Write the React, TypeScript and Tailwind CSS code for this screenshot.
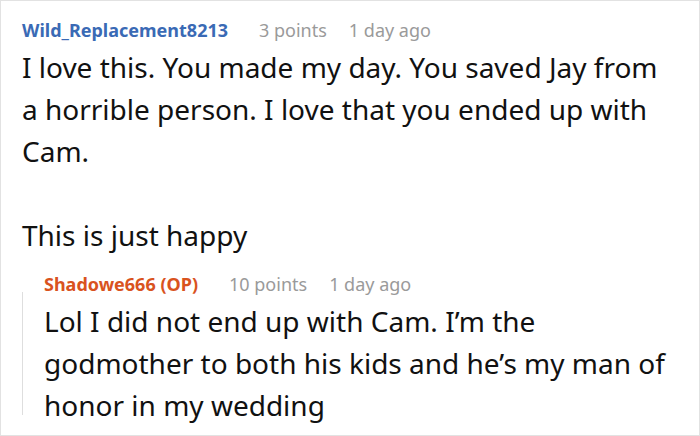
import React from "react";

interface Comment {
  author: string;
  points: string;
  age: string;
  lines: string[];
  op?: boolean;
}

const top: Comment = {
  author: "Wild_Replacement8213",
  points: "3 points",
  age: "1 day ago",
  lines: [
    "I love this. You made my day. You saved Jay from",
    "a horrible person. I love that you ended up with",
    "Cam.",
    "",
    "This is just happy",
  ],
};

const reply: Comment = {
  author: "Shadowe666 (OP)",
  points: "10 points",
  age: "1 day ago",
  op: true,
  lines: [
    "Lol I did not end up with Cam. I\u2019m the",
    "godmother to both his kids and he\u2019s my man of",
    "honor in my wedding",
  ],
};

const Meta: React.FC<{ c: Comment }> = ({ c }) => (
  <div className="flex items-center text-[18px] leading-[22px]">
    <span className={c.op ? "font-bold text-[#d9531e]" : "font-bold text-[#3a6ab5]"}>{c.author}</span>
    <span className="text-[#9a9a9a] ml-[31px]">{c.points}</span>
    <span className="text-[#9a9a9a] ml-[22px]">{c.age}</span>
  </div>
);

const Body: React.FC<{ lines: string[] }> = ({ lines }) => (
  <div className="mt-[5px] text-[28px] leading-[42px] whitespace-nowrap">
    {lines.map((l, i) => (
      <div key={i} className="h-[42px]">
        {l}
      </div>
    ))}
  </div>
);

export default function App() {
  return (
    <div
      className="w-[700px] h-[436px] border border-[#e2e2e2] bg-white text-[#111] overflow-hidden"
      style={{ fontFamily: '"Noto Sans", "Open Sans", sans-serif' }}
    >
      <div className="pl-[21px] pr-[20px] pt-[18px]">
        <Meta c={top} />
        <Body lines={top.lines} />
        <div className="mt-[17px] flex">
          <div className="w-px bg-[#dedede] mt-[19px] mb-[11px]" />
          <div className="pl-[21px]">
            <Meta c={reply} />
            <Body lines={reply.lines} />
          </div>
        </div>
      </div>
    </div>
  );
}
